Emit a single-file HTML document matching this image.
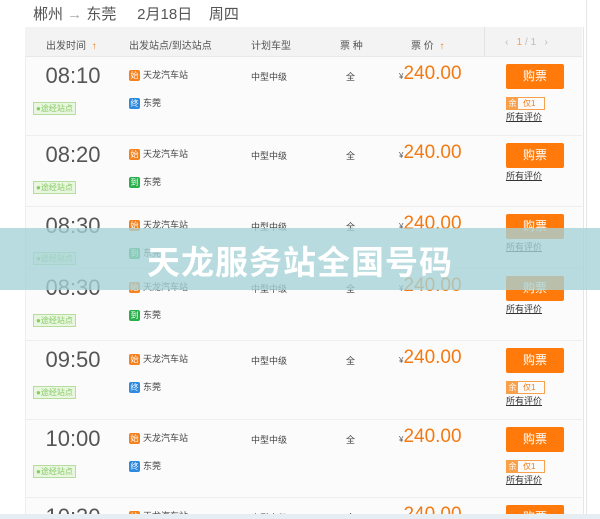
<!DOCTYPE html><html><head><meta charset="utf-8"><style>
html,body{margin:0;width:600px;height:519px;overflow:hidden}
body{background:#fff;font-family:"Liberation Sans","Noto Sans CJK SC",sans-serif;position:relative;color:#333}
.a{position:absolute;white-space:nowrap}
.hd{font-size:15px;color:#555}
.tbl{position:absolute;left:25px;top:27px;width:557px;height:492px;background:#fbfbfb;border-left:1px solid #eee;border-right:1px solid #e6e6e6}
.th{font-size:10px;color:#555}
.time{font-size:22px;color:#555;width:80px;text-align:center}
.tag{display:inline-block;width:11px;height:11px;font-size:8px;color:#fff;text-align:center;line-height:11px;border-radius:2px;margin-right:3px;vertical-align:middle}
.st{font-size:9px;color:#444}
.price{font-size:19px;color:#f37a12}
.btn{width:58px;height:25px;background:#ff7a0a;color:#fff;font-size:12px;text-align:center;line-height:25px;border-radius:2px}
.tj{font-size:8px;color:#8c6;border:1px solid #b6dca0;background:#e9f6e0;padding:0 2px;line-height:11px}
.yu{font-size:8px;border:1px solid #f9a04a;line-height:11px;width:37px;height:11px}
.yu b{display:inline-block;background:#f9a04a;color:#fff;font-weight:normal;width:11px;text-align:center}
.yu i{font-style:normal;color:#f37a12;padding-left:5px}
.pj{font-size:9px;color:#333;text-decoration:underline}
.sep{position:absolute;left:25px;width:557px;height:1px;background:#eee}
</style></head><body>
<div class="a hd" style="left:33px;top:3px">郴州 <span style="color:#aaa">→</span> 东莞 &nbsp; &nbsp; 2月18日 &nbsp; &nbsp;周四</div>
<div class="tbl"></div>
<div class="a" style="left:25px;top:27px;width:557px;height:29px;background:#f3f3f3;border-bottom:1px solid #e8e8e8"></div>
<div class="a" style="left:484px;top:27px;width:1px;height:29px;background:#e3e3e3"></div>
<div class="a th" style="left:46px;top:37px">出发时间 &nbsp;<span style="color:#f37a12;font-weight:bold">↑</span></div>
<div class="a th" style="left:129px;top:37px">出发站点/到达站点</div>
<div class="a th" style="left:251px;top:37px">计划车型</div>
<div class="a th" style="left:340px;top:37px">票 种</div>
<div class="a th" style="left:411px;top:37px">票 价 &nbsp;<span style="color:#f37a12;font-weight:bold">↑</span></div>
<div class="a th" style="left:505px;top:37px;color:#bbb">‹ &nbsp; <span style="color:#f9a04a">1</span> / 1 &nbsp; ›</div>
<div class="a" style="left:586px;top:0;width:1px;height:519px;background:#e6e6e6"></div>

<div id="rows"></div>
<script>
var rows=[[56,'08:10','终','#2d8ae0','余'],[135,'08:20','到','#2ab04a',''],[206,'08:30','到','#2ab04a',''],[268,'08:30','到','#2ab04a',''],[340,'09:50','终','#2d8ae0','余'],[419,'10:00','终','#2d8ae0','余'],[497,'10:30','终','#2d8ae0','']];
var h='';
rows.forEach(function(r,i){var t=r[0];
if(i>0)h+='<div class="sep" style="top:'+t+'px"></div>';
h+='<div class="a time" style="left:33px;top:'+(t+7)+'px">'+r[1]+'</div>';
h+='<div class="a st" style="left:129px;top:'+(t+12)+'px"><span class="tag" style="background:#f5821f">始</span>天龙汽车站</div>';
h+='<div class="a st" style="left:129px;top:'+(t+40)+'px"><span class="tag" style="background:'+r[3]+'">'+r[2]+'</span>东莞</div>';
h+='<div class="a tj" style="left:33px;top:'+(t+46)+'px">●途经站点</div>';
h+='<div class="a st" style="left:251px;top:'+(t+14)+'px">中型中级</div>';
h+='<div class="a st" style="left:346px;top:'+(t+14)+'px">全</div>';
h+='<div class="a price" style="left:399px;top:'+(t+7)+'px"><span style="font-size:8px;color:#555">¥</span>240.00</div>';
h+='<div class="a btn" style="left:506px;top:'+(t+8)+'px">购票</div>';
var pj=t+34;
if(r[4]){h+='<div class="a yu" style="left:506px;top:'+(t+41)+'px"><b>余</b><i>仅1</i></div>';pj=t+54;}
h+='<div class="a pj" style="left:506px;top:'+pj+'px">所有评价</div>';
});
document.getElementById('rows').innerHTML=h;
</script>
<div class="a" style="left:0;top:514px;width:600px;height:5px;background:#e6eef3"></div>
<div class="a" style="left:0;top:228px;width:600px;height:62px;background:rgba(165,210,215,0.78)"></div>
<div class="a" style="left:0;top:236px;width:600px;text-align:center;font-size:33px;font-weight:bold;color:#fff;letter-spacing:1px">天龙服务站全国号码</div>
</body></html>
